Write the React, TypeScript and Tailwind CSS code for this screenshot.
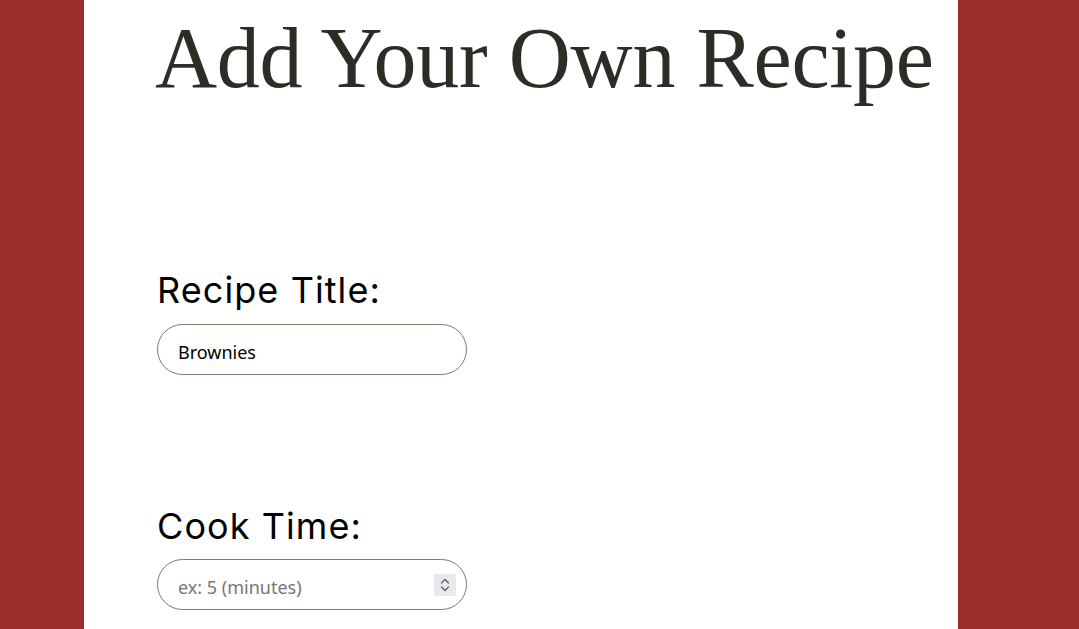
import { useState } from 'react';

export default function App() {
    const [title, setTitle] = useState('Brownies');
    const [cookTime, setCookTime] = useState('');

    return (
        <div className="min-h-screen w-full bg-[#9b2d2b] flex overflow-hidden">
            <div className="ml-[84px] w-[874px] shrink-0 min-h-screen bg-white pl-[71px] pt-[8px] flex flex-col">
                <h1 className="text-[86px] leading-[100px] text-[#2b2e25] font-normal font-['Liberation_Serif',serif] tracking-[-0.003em] whitespace-nowrap">
                    Add Your Own Recipe
                </h1>

                {/* ── Recipe title ─────────────────────────────────────────── */}
                <label className="mt-[160px] ml-[2px] text-[36px] leading-[44px] tracking-[0.03em] text-black font-['Inter',sans-serif]">
                    Recipe Title:
                </label>
                <input
                    type="text"
                    value={title}
                    onChange={e => setTitle(e.target.value)}
                    className="mt-[12px] ml-[2px] w-[310px] h-[51px] rounded-full border border-[#7c7b6c] pl-5 pr-4 pt-1 text-[18px] text-black outline-none font-['Noto_Sans',sans-serif]"
                />

                {/* ── Cook time ────────────────────────────────────────────── */}
                <label className="mt-[129px] ml-[2px] text-[36px] leading-[44px] tracking-[0.03em] text-black font-['Inter',sans-serif]">
                    Cook Time:
                </label>
                <div className="relative mt-[11px] ml-[2px] w-[310px] h-[51px]">
                    <input
                        type="text"
                        inputMode="numeric"
                        value={cookTime}
                        placeholder="ex: 5 (minutes)"
                        onChange={e => setCookTime(e.target.value)}
                        className="w-full h-full rounded-full border border-[#7c7b6c] pl-5 pr-10 pt-1 text-[18px] text-black placeholder:text-[#767676] outline-none font-['Noto_Sans',sans-serif]"
                    />
                    <div className="absolute right-[11px] top-[15px] w-[22px] h-[22px] bg-[#e9e9ed] flex items-center justify-center">
                        <svg width="12" height="18" viewBox="0 0 12 18" fill="none" stroke="#5f5f66" strokeWidth="1.3" strokeLinecap="round" strokeLinejoin="round">
                            <path d="M2.5 7 L6 3.5 L9.5 7" />
                            <path d="M2.5 11 L6 14.5 L9.5 11" />
                        </svg>
                    </div>
                </div>
            </div>
        </div>
    );
}
